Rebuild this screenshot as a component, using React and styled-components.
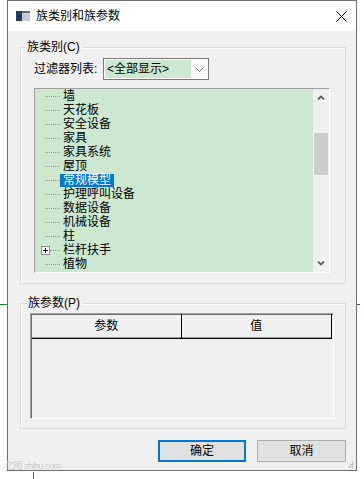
import React from 'react';
import styled, { createGlobalStyle } from 'styled-components';

const GlobalStyle = createGlobalStyle`
  html, body {
    margin: 0;
    padding: 0;
    background: #fff;
  }
  body {
    font-family: "Liberation Sans", "Noto Sans CJK SC", sans-serif;
    font-size: 12px;
    color: #000;
  }
`;

const Screen = styled.div`
  position: relative;
  width: 364px;
  height: 479px;
  overflow: hidden;
  padding-left: 7px;
  box-sizing: border-box;
  background: #fff;
`;

// CAD canvas bits peeking out around the dialog
const CanvasMark = styled.div`
  position: absolute;
  background: #1f8a2a;
  left: ${p => p.$x}px;
  top: ${p => p.$y}px;
  width: ${p => p.$w}px;
  height: ${p => p.$h}px;
`;

const Watermark = styled.div`
  position: absolute;
  left: 5px;
  top: 461px;
  font-size: 9px;
  line-height: 10px;
  color: #c9c9c9;
  letter-spacing: -0.5px;
`;

const Window = styled.div`
  position: relative;
  width: 350px;
  height: 471px;
  box-sizing: border-box;
  border: 1px solid #6e6e6e;
  background: #f0f0f0;
  display: flex;
  flex-direction: column;
`;

const TitleBar = styled.div`
  height: 30px;
  background: #fff;
  display: flex;
  align-items: center;
  padding-left: 8px;
  gap: 6px;
`;

const Title = styled.span`
  font-size: 12px;
  line-height: 14px;
`;

const CloseBtn = styled.span`
  margin-left: auto;
  margin-right: 9px;
  display: flex;
`;

const Body = styled.div`
  padding: 16px 10px 0 12px;
  display: flex;
  flex-direction: column;
`;

const GroupBox = styled.div`
  position: relative;
  width: 326px;
  height: ${p => p.$h}px;
  box-sizing: border-box;
  border: 1px solid #dcdcdc;
  box-shadow: inset 1px 1px 0 #fff;
  margin-top: ${p => p.$mt || 0}px;
  padding: ${p => p.$pad};
`;

const Legend = styled.span`
  position: absolute;
  top: -8px;
  left: ${p => p.$x}px;
  padding: 0 2px 0 1px;
  line-height: 14px;
  background: #f0f0f0;
`;

const FilterRow = styled.div`
  display: flex;
  align-items: center;
  height: 22px;
`;

const FilterLabel = styled.span`
  width: 69px;
  line-height: 14px;
`;

const Combo = styled.div`
  width: 106px;
  height: 22px;
  box-sizing: border-box;
  border: 1px solid #7a7a7a;
  background: #fff;
  display: flex;
  padding: 1px;
`;

const ComboField = styled.div`
  width: 84px;
  background: #cde8cf;
  padding-left: 2px;
  display: flex;
  align-items: center;
  line-height: 14px;
`;

const ComboArrow = styled.div`
  flex: 1;
  display: flex;
  align-items: center;
  justify-content: center;
  background: #fafafa;
`;

const Tree = styled.div`
  margin-top: 8px;
  width: 296px;
  height: 185px;
  box-sizing: border-box;
  border: 1px solid;
  border-color: #a0a0a0 #fff #fff #a0a0a0;
  box-shadow: inset 1px 1px 0 #696969;
  display: flex;
  overflow: hidden;
`;

const TreeList = styled.div`
  flex: 1;
  background: #cde8cf;
  padding-top: 0;
  padding-left: 1px;
`;

const TreeRow = styled.div`
  height: 14px;
  display: flex;
  align-items: center;
`;

const Gutter = styled.span`
  width: ${p => p.$w}px;
  flex: none;
`;

const Dots = styled.span`
  width: ${p => p.$w}px;
  flex: none;
  border-top: 1px dotted #9a9a9a;
`;

const PlusBox = styled.span`
  width: 9px;
  height: 9px;
  box-sizing: border-box;
  flex: none;
  border: 1px solid #919191;
  background: #fff;
  display: flex;
  align-items: center;
  justify-content: center;
`;

const NodeLabel = styled.span`
  padding: 0 3px;
  line-height: 13px;
  height: 13px;
  white-space: nowrap;
  background: ${p => (p.$selected ? '#0078d7' : 'transparent')};
  color: ${p => (p.$selected ? '#fff' : '#000')};
`;

const ScrollBar = styled.div`
  width: 16px;
  background: #f0f0f0;
  display: flex;
  flex-direction: column;
`;

const ScrollBtn = styled.div`
  height: 17px;
  display: flex;
  align-items: center;
  justify-content: center;
`;

const ScrollTrack = styled.div`
  flex: 1;
  padding-top: 27px;
`;

const Thumb = styled.div`
  height: 42px;
  margin: 0 1px;
  background: #cdcdcd;
`;

const ParamTable = styled.div`
  width: 304px;
  height: 106px;
  box-sizing: border-box;
  border: 1px solid;
  border-color: #a0a0a0 #fff #fff #a0a0a0;
  box-shadow: inset 1px 1px 0 #696969;
  display: flex;
  flex-direction: column;
`;

const HeaderRow = styled.div`
  display: flex;
  height: 25px;
  margin-left: 1px;
  margin-right: 1px;
`;

const HeaderCell = styled.div`
  width: ${p => p.$w}px;
  box-sizing: border-box;
  border-right: 1px solid #000;
  border-bottom: 1px solid #000;
  box-shadow: inset 0 -1px 0 #a0a0a0;
  display: flex;
  align-items: center;
  justify-content: center;
  line-height: 14px;
`;

const ButtonRow = styled.div`
  margin-top: 11px;
  display: flex;
  justify-content: flex-end;
  gap: 11px;
`;

const DlgButton = styled.button`
  width: ${p => p.$w}px;
  height: 22px;
  box-sizing: border-box;
  padding: 0;
  background: #e1e1e1;
  border: ${p => (p.$default ? '2px solid #0078d7' : '1px solid #adadad')};
  font-family: inherit;
  font-size: 12px;
  line-height: 14px;
  color: #000;
`;

const Grip = styled.svg`
  position: absolute;
  right: 2px;
  bottom: 2px;
`;

const categories = [
  '墙', '天花板', '安全设备', '家具', '家具系统', '屋顶', '常规模型',
  '护理呼叫设备', '数据设备', '机械设备', '柱', '栏杆扶手', '植物',
];

function WindowIcon() {
  return (
    <svg width="14" height="10" viewBox="0 0 14 10">
      <rect x="0" y="0" width="14" height="10" fill="#c3cdd8" />
      <rect x="0" y="0" width="6" height="10" fill="#243c5c" />
      <rect x="6" y="0" width="8" height="2" fill="#5d6f84" />
    </svg>
  );
}

function Chevron({ up }) {
  return (
    <svg width="8" height="5" viewBox="0 0 8 5">
      <path
        d={up ? 'M1 4.5 L4 1.5 L7 4.5' : 'M1 0.5 L4 3.5 L7 0.5'}
        fill="none"
        stroke="#606060"
        strokeWidth="1.8"
      />
    </svg>
  );
}

export default function App() {
  return (
    <Screen>
      <GlobalStyle />
      <Window>
        <TitleBar>
          <WindowIcon />
          <Title>族类别和族参数</Title>
          <CloseBtn>
            <svg width="11" height="11" viewBox="0 0 11 11">
              <path d="M0.5 0.5 L10.5 10.5 M10.5 0.5 L0.5 10.5" stroke="#000" strokeWidth="1" />
            </svg>
          </CloseBtn>
        </TitleBar>
        <Body>
          <GroupBox $h={237} $pad="10px 14px 0 13px">
            <Legend $x={5}>族类别(C)</Legend>
            <FilterRow>
              <FilterLabel>过滤器列表:</FilterLabel>
              <Combo>
                <ComboField>&lt;全部显示&gt;</ComboField>
                <ComboArrow>
                  <svg width="9" height="5" viewBox="0 0 9 5">
                    <path d="M0.5 0.5 L4.5 4.5 L8.5 0.5" fill="none" stroke="#707070" strokeWidth="1" />
                  </svg>
                </ComboArrow>
              </Combo>
            </FilterRow>
            <Tree>
              <TreeList>
                {categories.map(name => (
                  <TreeRow key={name}>
                    {name === '栏杆扶手' ? (
                      <>
                        <Gutter $w={5} />
                        <PlusBox>
                          <svg width="7" height="7" viewBox="0 0 7 7">
                            <path d="M1 3.5 H6 M3.5 1 V6" stroke="#000" strokeWidth="1" />
                          </svg>
                        </PlusBox>
                        <Dots $w={10} />
                      </>
                    ) : (
                      <>
                        <Gutter $w={9} />
                        <Dots $w={15} />
                      </>
                    )}
                    <NodeLabel $selected={name === '常规模型'}>{name}</NodeLabel>
                  </TreeRow>
                ))}
              </TreeList>
              <ScrollBar>
                <ScrollBtn><Chevron up /></ScrollBtn>
                <ScrollTrack><Thumb /></ScrollTrack>
                <ScrollBtn><Chevron /></ScrollBtn>
              </ScrollBar>
            </Tree>
          </GroupBox>
          <GroupBox $h={126} $mt={19} $pad="9px 0 0 9px">
            <Legend $x={6}>族参数(P)</Legend>
            <ParamTable>
              <HeaderRow>
                <HeaderCell $w={150}>参数</HeaderCell>
                <HeaderCell $w={151}>值</HeaderCell>
              </HeaderRow>
            </ParamTable>
          </GroupBox>
          <ButtonRow>
            <DlgButton $w={88} $default>确定</DlgButton>
            <DlgButton $w={89}>取消</DlgButton>
          </ButtonRow>
        </Body>
        <Grip width="7" height="7" viewBox="0 0 7 7">
          {[[5, 0], [3, 2], [5, 2], [1, 4], [3, 4], [5, 4]].map(([x, y]) => (
            <rect key={`${x}-${y}`} x={x} y={y + 1} width="1.5" height="1.5" fill="#b8b8b8" />
          ))}
        </Grip>
      </Window>
      <CanvasMark $x={0} $y={304} $w={7} $h={1} />
      <CanvasMark $x={357} $y={304} $w={3} $h={1} />
      <CanvasMark $x={33} $y={472} $w={1} $h={7} />
      <Watermark>亿图 zhihu.com</Watermark>
    </Screen>
  );
}
